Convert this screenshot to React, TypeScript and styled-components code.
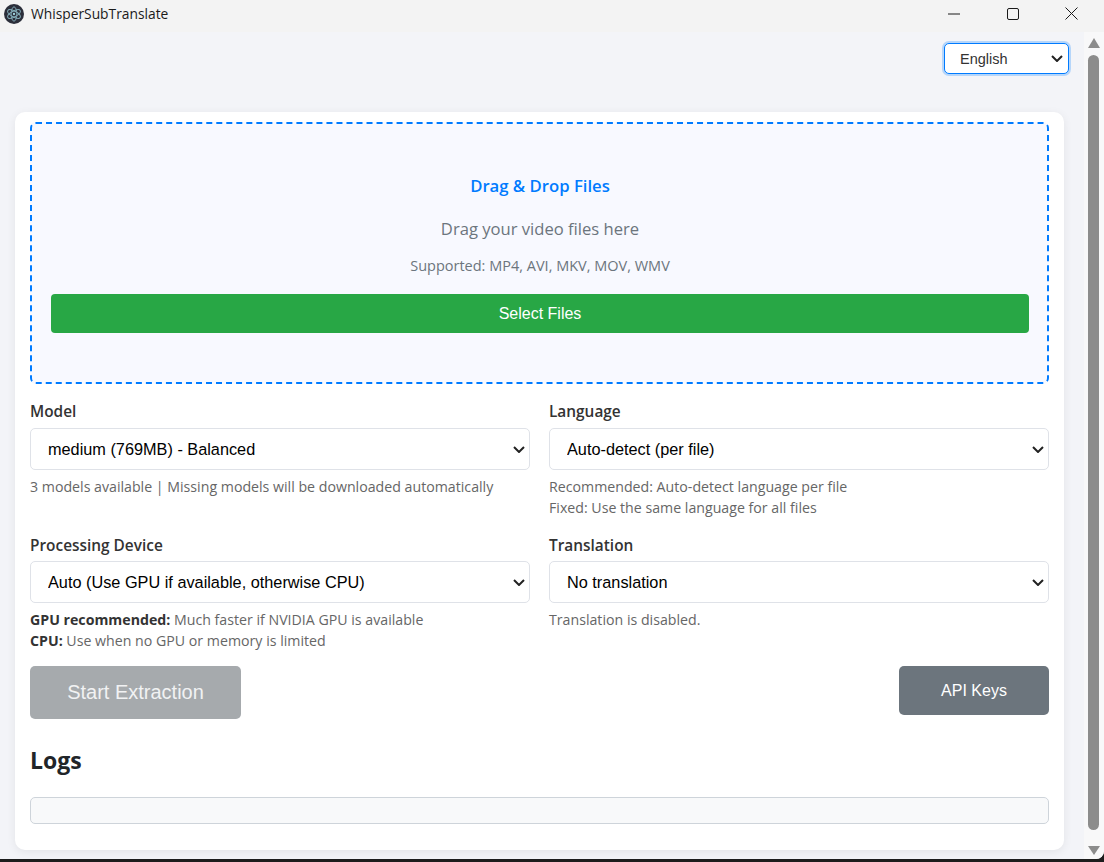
import React from 'react';
import styled, { createGlobalStyle } from 'styled-components';

const chevron =
  "url(\"data:image/svg+xml,%3Csvg xmlns='http://www.w3.org/2000/svg' width='12' height='7' viewBox='0 0 12 7'%3E%3Cpath d='M1 1l5 5 5-5' fill='none' stroke='%23222' stroke-width='2'/%3E%3C/svg%3E\")";

const GlobalStyle = createGlobalStyle`
  html, body {
    margin: 0;
    padding: 0;
    height: 100%;
    overflow: hidden;
    background: #1c1c1c;
    font-family: "Open Sans", "Noto Sans", sans-serif;
  }
  * { box-sizing: border-box; }
`;

const Window = styled.div`
  width: 1104px;
  height: 862px;
  display: flex;
  flex-direction: column;
  padding-bottom: 3px;
  background: #1c1c1c;
  overflow: hidden;
`;

const TitleBar = styled.header`
  height: 32px;
  flex: none;
  display: flex;
  align-items: center;
  background: #f3f3f3;
  padding: 0 3px 5px 4px;
`;

const AppTitle = styled.span`
  margin-left: 7px;
  font-family: "Open Sans", sans-serif;
  font-size: 13.8px;
  color: #1a1a1a;
`;

const WindowButtons = styled.div`
  margin-left: auto;
  display: flex;
`;

const WindowButton = styled.div`
  width: 59px;
  height: 27px;
  display: flex;
  align-items: center;
  justify-content: center;
`;

const Body = styled.div`
  flex: 1;
  display: flex;
  min-height: 0;
  background: #f3f4f8;
  border-bottom-right-radius: 8px;
  overflow: hidden;
`;

const Main = styled.main`
  flex: 1;
  min-width: 0;
  padding: 10px 20px 10px 15px;
  display: flex;
  flex-direction: column;
`;

const TopRow = styled.div`
  display: flex;
  justify-content: flex-end;
  height: 70px;
  flex: none;
`;

const LanguageSelect = styled.select`
  appearance: none;
  width: 125px;
  height: 31px;
  margin: 1px -5px 0 0;
  padding: 0 8px 0 15px;
  font-family: "Liberation Sans", Arial, sans-serif;
  font-size: 14.5px;
  color: #333;
  background: #fff ${chevron} no-repeat right 5px center;
  border: 1px solid #007bff;
  border-radius: 5px;
  box-shadow: 0 0 0 2px rgba(0, 123, 255, 0.25);
  outline: none;
`;

const Card = styled.section`
  flex: 1;
  background: #fff;
  border-radius: 10px;
  box-shadow: 0 2px 10px rgba(0, 0, 0, 0.07);
  padding: 10px 15px 26px;
  display: flex;
  flex-direction: column;
`;

const DropZone = styled.div`
  height: 262px;
  flex: none;
  background: #f8f9ff;
  border: 2px dashed #007bff;
  border-radius: 6px;
  padding: 51px 18px 0 19px;
  display: flex;
  flex-direction: column;
  align-items: center;
`;

const DropTitle = styled.h3`
  margin: 0;
  font-size: 16.7px;
  line-height: 22px;
  font-weight: 600;
  color: #007bff;
`;

const DropText = styled.p`
  margin: 21px 0 0;
  font-size: 16.6px;
  line-height: 22px;
  color: #6c757d;
`;

const DropFormats = styled.p`
  margin: 17px 0 0;
  font-size: 14.5px;
  line-height: 18px;
  color: #6c757d;
`;

const SelectFilesButton = styled.button`
  width: 100%;
  height: 39px;
  margin-top: 19px;
  border: none;
  border-radius: 4px;
  background: #28a745;
  color: #fff;
  font-family: "Liberation Sans", Arial, sans-serif;
  font-size: 16px;
`;

const FormGrid = styled.div`
  display: grid;
  grid-template-columns: 500px 500px;
  column-gap: 19px;
  margin-top: 17px;
`;

const Field = styled.div<{ $height: number }>`
  height: ${(p) => p.$height}px;
`;

const FieldLabel = styled.label<{ $lower?: boolean }>`
  display: block;
  padding-top: ${(p) => (p.$lower ? 2 : 1)}px;
  margin-bottom: ${(p) => (p.$lower ? -1 : 0)}px;
  font-size: 15.4px;
  line-height: 20px;
  font-weight: 600;
  color: #333;
`;

const FieldSelect = styled.select`
  appearance: none;
  display: block;
  width: 100%;
  height: 42px;
  margin-top: 6px;
  padding: 0 24px 0 17px;
  background: #fff ${chevron} no-repeat right 4px center;
  border: 1px solid #dfe2e8;
  border-radius: 5px;
  font-family: "Liberation Sans", Arial, sans-serif;
  font-size: 16.3px;
  color: #000;
  outline: none;
`;

const Hint = styled.div`
  margin-top: 6px;
  font-size: 14.18px;
  line-height: 21px;
  color: #666;
  strong {
    font-weight: 700;
    color: #333;
  }
`;

const ActionRow = styled.div`
  display: flex;
  justify-content: space-between;
  align-items: flex-start;
  margin-top: 7px;
`;

const ActionButton = styled.button<{ $tone: 'muted' | 'gray' }>`
  border: none;
  color: #fff;
  font-family: "Liberation Sans", Arial, sans-serif;
  border-radius: 5px;
  ${(p) =>
    p.$tone === 'muted'
      ? `
    width: 211px;
    height: 53px;
    font-size: 20px;
    background: #a6aaad;
    color: #f1f2f3;
  `
      : `
    width: 150px;
    height: 49px;
    font-size: 16px;
    background: #6c757d;
  `}
`;

const LogsHeading = styled.h2`
  margin: 25px 0 0;
  font-size: 23px;
  line-height: 32px;
  font-weight: 700;
  color: #212529;
`;

const LogBox = styled.div`
  height: 27px;
  margin-top: 21px;
  background: #f8f9fa;
  border: 1px solid #ced4da;
  border-radius: 5px;
`;

const ScrollTrack = styled.aside`
  width: 20px;
  flex: none;
  background: #f8f8f9;
  display: flex;
  flex-direction: column;
  align-items: center;
  padding: 6px 1px 4px 0;
`;

const ScrollArrow = styled.div<{ $dir: 'up' | 'down' }>`
  width: 0;
  height: 0;
  flex: none;
  border-left: 6.5px solid transparent;
  border-right: 6.5px solid transparent;
  ${(p) => (p.$dir === 'up' ? 'border-bottom: 10px solid #8c8c8c;' : 'border-top: 9px solid #8c8c8c;')}
`;

const ScrollThumb = styled.div`
  flex: 1;
  width: 11px;
  margin: 7px 0 16px;
  background: #8c8c8c;
  border-radius: 6px;
`;

const ElectronLogo = () => (
  <svg width="20" height="20" viewBox="0 0 21 21">
    <circle cx="10.5" cy="10.5" r="10.5" fill="#2b2e3a" />
    <g fill="none" stroke="#9fd4e0" strokeWidth="1" opacity="0.75">
      <ellipse cx="10.5" cy="10.5" rx="7.5" ry="3" transform="rotate(30 10.5 10.5)" />
      <ellipse cx="10.5" cy="10.5" rx="7.5" ry="3" transform="rotate(90 10.5 10.5)" />
      <ellipse cx="10.5" cy="10.5" rx="7.5" ry="3" transform="rotate(150 10.5 10.5)" />
    </g>
    <circle cx="10.5" cy="10.5" r="1.2" fill="#9fd4e0" />
  </svg>
);

const App = () => (
  <Window>
    <GlobalStyle />
    <TitleBar>
      <ElectronLogo />
      <AppTitle>WhisperSubTranslate</AppTitle>
      <WindowButtons>
        <WindowButton>
          <svg width="12" height="12" viewBox="0 0 12 12">
            <path d="M0 6h12" stroke="#1a1a1a" strokeWidth="1" />
          </svg>
        </WindowButton>
        <WindowButton>
          <svg width="12" height="12" viewBox="0 0 12 12">
            <rect x="0.5" y="0.5" width="11" height="11" rx="1.5" fill="none" stroke="#1a1a1a" />
          </svg>
        </WindowButton>
        <WindowButton>
          <svg width="13" height="13" viewBox="0 0 13 13">
            <path d="M0.5 0.5l12 12M12.5 0.5l-12 12" stroke="#1a1a1a" strokeWidth="1" />
          </svg>
        </WindowButton>
      </WindowButtons>
    </TitleBar>
    <Body>
      <Main>
        <TopRow>
          <LanguageSelect defaultValue="en">
            <option value="en">English</option>
          </LanguageSelect>
        </TopRow>
        <Card>
          <DropZone>
            <DropTitle>Drag &amp; Drop Files</DropTitle>
            <DropText>Drag your video files here</DropText>
            <DropFormats>Supported: MP4, AVI, MKV, MOV, WMV</DropFormats>
            <SelectFilesButton>Select Files</SelectFilesButton>
          </DropZone>
          <FormGrid>
            <Field $height={133}>
              <FieldLabel>Model</FieldLabel>
              <FieldSelect>
                <option>medium (769MB) - Balanced</option>
              </FieldSelect>
              <Hint>3 models available | Missing models will be downloaded automatically</Hint>
            </Field>
            <Field $height={133}>
              <FieldLabel>Language</FieldLabel>
              <FieldSelect>
                <option>Auto-detect (per file)</option>
              </FieldSelect>
              <Hint>
                Recommended: Auto-detect language per file
                <br />
                Fixed: Use the same language for all files
              </Hint>
            </Field>
            <Field $height={125}>
              <FieldLabel $lower>Processing Device</FieldLabel>
              <FieldSelect>
                <option>Auto (Use GPU if available, otherwise CPU)</option>
              </FieldSelect>
              <Hint>
                <strong>GPU recommended:</strong> Much faster if NVIDIA GPU is available
                <br />
                <strong>CPU:</strong> Use when no GPU or memory is limited
              </Hint>
            </Field>
            <Field $height={125}>
              <FieldLabel $lower>Translation</FieldLabel>
              <FieldSelect>
                <option>No translation</option>
              </FieldSelect>
              <Hint>Translation is disabled.</Hint>
            </Field>
          </FormGrid>
          <ActionRow>
            <ActionButton $tone="muted">Start Extraction</ActionButton>
            <ActionButton $tone="gray">API Keys</ActionButton>
          </ActionRow>
          <LogsHeading>Logs</LogsHeading>
          <LogBox />
        </Card>
      </Main>
      <ScrollTrack>
        <ScrollArrow $dir="up" />
        <ScrollThumb />
        <ScrollArrow $dir="down" />
      </ScrollTrack>
    </Body>
  </Window>
);

export default App;
